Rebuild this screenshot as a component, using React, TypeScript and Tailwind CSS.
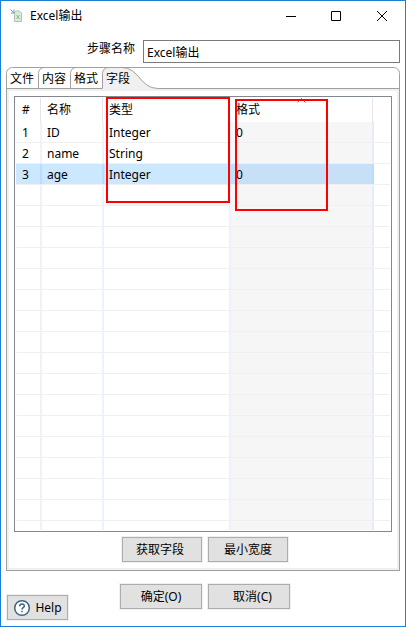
import { useState } from "react";
import clsx from "clsx";

type Field = { name: string; type: string; format: string };

const tabs = ["文件", "内容", "格式", "字段"];

const fields: Field[] = [
  { name: "ID", type: "Integer", format: "0" },
  { name: "name", type: "String", format: "" },
  { name: "age", type: "Integer", format: "0" },
];

const EMPTY_ROWS = 16;

const DialogButton = (props: {
  className?: string;
  children: React.ReactNode;
}) => (
  <button
    className={clsx(
      "flex h-[25px] items-center justify-center border border-[#adadad] bg-[#e1e1e1] leading-none outline outline-[#f0f0f0]",
      props.className
    )}
  >
    {props.children}
  </button>
);

const TitleBar = () => (
  <div className="flex h-[30px] shrink-0 items-center">
    <svg className="ml-[9px] -mt-px" width="13" height="14" viewBox="0 0 13 14">
      <path d="M4.5 3.5l2-1.5h3l2 2v8.5h-7z" fill="#dcecdc" stroke="#a9c4b4" />
      <path d="M6.5 6l3 4M9.5 6l-3 4" stroke="#8db89a" fill="none" />
      <path d="M0.5 0.5l3 3M4 0.5v3.5h-3" stroke="#7d96a8" fill="none" />
    </svg>
    <span className="ml-[7px] leading-4">Excel输出</span>
    <svg
      className="ml-auto mr-[17px]"
      width="102"
      height="10"
      viewBox="0 0 102 10"
      fill="none"
      stroke="#000"
    >
      <path d="M0 5.5h10" />
      <path d="M45.5 0.5h9v9h-9z" />
      <path d="M91 0l10 10M101 0l-10 10" />
    </svg>
  </div>
);

const TabBar = (props: { active: number; onSelect: (i: number) => void }) => (
  <div className="relative h-[22px] shrink-0">
    <svg
      className="absolute left-0 top-0"
      width="394"
      height="22"
      viewBox="0 0 394 22"
      fill="none"
      stroke="#a0a0a0"
    >
      <path
        d="M96.5 22V7C96.5 3 99 0.5 103 0.5H116C133 0.5 134 21.5 152 21.5V22z"
        fill="#f0f0f0"
        stroke="none"
      />
      <path d="M0.5 22V6.5C0.5 3 3 0.5 6.5 0.5H387C391 0.5 393.5 3 393.5 6.5V22" />
      <path d="M32.5 21V6.5C32.5 3 35 0.5 38.5 0.5" />
      <path d="M64.5 21V6.5C64.5 3 67 0.5 70.5 0.5" />
      <path d="M0 21.5H96.5V6.5C96.5 3 99 0.5 102.5 0.5H116C133 0.5 134 21.5 152 21.5H394" />
    </svg>
    <div className="relative flex">
      {tabs.map((tab, i) => (
        <button
          key={tab}
          aria-selected={props.active === i}
          className="h-[22px] w-8 pt-px text-center leading-[22px]"
          onClick={() => props.onSelect(i)}
        >
          {tab}
        </button>
      ))}
    </div>
  </div>
);

const Row = (props: { index?: number; field?: Field; selected?: boolean }) => {
  const { index, field, selected } = props;
  const line = selected ? "border-[#b8dcfb]" : "border-[#edf3fd]";

  return (
    <div className="flex h-[21px] shrink-0 border-b border-[#f0f0f0] leading-[21px]">
      <div className={clsx("flex flex-1", selected && "bg-[#cce8ff]")}>
        <div className={clsx("w-[26px] border-r-2 pl-1.5", line)}>{index}</div>
        <div className={clsx("w-[62px] border-r-2 pl-[5px]", line)}>
          {field?.name}
        </div>
        <div
          className={clsx(
            "w-[127px] border-r-2 pl-[5px]",
            selected ? "border-[#c3defa]" : "border-[#edf1fa]"
          )}
        >
          {field?.type}
        </div>
        <div
          className={clsx(
            "w-[143px] border-r-2 pl-[5px]",
            selected
              ? "border-[#b8dcfb] bg-[#c8e0f7]"
              : "border-[#e6edf8] bg-[#f6f6f6]"
          )}
        >
          {field?.format}
        </div>
        <div className="flex-1 bg-white" />
      </div>
    </div>
  );
};

const FieldTable = () => (
  <div className="relative flex h-[436px] w-[378px] shrink-0 flex-col border border-[#828790] bg-white p-px">
    <div className="flex h-6 shrink-0 leading-6">
      <div className="w-[25px] border-r border-[#e5e5e5] pl-1.5">#</div>
      <div className="w-[62px] border-r border-[#e5e5e5] pl-1.5">名称</div>
      <div className="w-[127px] border-r border-[#e5e5e5] pl-1.5">类型</div>
      <div className="relative w-[143px] border-r border-[#e5e5e5] pl-1.5">
        格式
        <svg
          className="absolute left-[67px] top-0"
          width="9"
          height="5"
          viewBox="0 0 9 5"
          fill="none"
          stroke="#6d6d6d"
        >
          <path d="M0.5 4.5l4-4 4 4" />
        </svg>
      </div>
    </div>
    <div className="flex flex-1 flex-col overflow-hidden">
      {fields.map((field, i) => (
        <Row key={field.name} index={i + 1} field={field} selected={i === 2} />
      ))}
      {Array.from({ length: EMPTY_ROWS + 1 }, (_, i) => (
        <Row key={i} />
      ))}
    </div>
    {/* highlighted areas */}
    <div className="absolute left-[91px] top-0 h-[106px] w-[124px] border-2 border-[#ff0000]" />
    <div className="absolute left-[220px] top-[2px] h-[112px] w-[93px] border-2 border-[#ff0000]" />
  </div>
);

const App = () => {
  const [active, setActive] = useState(3);
  const [stepName, setStepName] = useState("Excel输出");

  return (
    <div className="flex h-[627px] w-[406px] flex-col overflow-hidden border border-[#1c7fd6] bg-white font-['Noto_Sans','Noto_Sans_CJK_SC',sans-serif] text-[12px] text-black">
      <TitleBar />
      <div className="mt-[9px] flex h-[23px] shrink-0 pl-[86px] pr-[5px]">
        <label className="w-14 leading-[17px]">步骤名称</label>
        <input
          className="h-[23px] w-[257px] border border-[#7a7a7a] px-[3px] focus:outline-none"
          value={stepName}
          onChange={(e) => setStepName(e.target.value)}
        />
      </div>

      <div className="ml-[5px] mt-1 flex w-[394px] flex-col">
        <TabBar active={active} onSelect={setActive} />
        <div className="flex h-[482px] flex-col border border-t-0 border-[#a0a0a0] bg-[#f0f0f0] p-[2px]">
          <div className="flex flex-1 flex-col bg-white pl-[5px] pt-[5px]">
            <FieldTable />
            <div className="mt-[5px] flex gap-1.5 pl-[108px]">
              <DialogButton className="w-20 pr-1">获取字段</DialogButton>
              <DialogButton className="w-20">最小宽度</DialogButton>
            </div>
          </div>
        </div>
      </div>

      <div className="mt-[13px] flex pl-1.5">
        <DialogButton className="mt-[11px] w-[61px] gap-1">
          <svg
            width="18"
            height="18"
            viewBox="0 0 18 18"
            fill="none"
            stroke="#3d6481"
            strokeWidth="1.5"
          >
            <circle cx="9" cy="9" r="7.3" fill="#fff" />
            <path d="M6.7 7.2C6.7 4.2 11.3 4.2 11.3 7C11.3 8.7 9 8.6 9 10.4M9 11.7v1.5" />
          </svg>
          Help
        </DialogButton>
        <DialogButton className="ml-[52px] w-[82px]">确定(O)</DialogButton>
        <DialogButton className="ml-1.5 w-[82px] pl-[7px]">
          取消(C)
        </DialogButton>
      </div>
    </div>
  );
};

export default App;
